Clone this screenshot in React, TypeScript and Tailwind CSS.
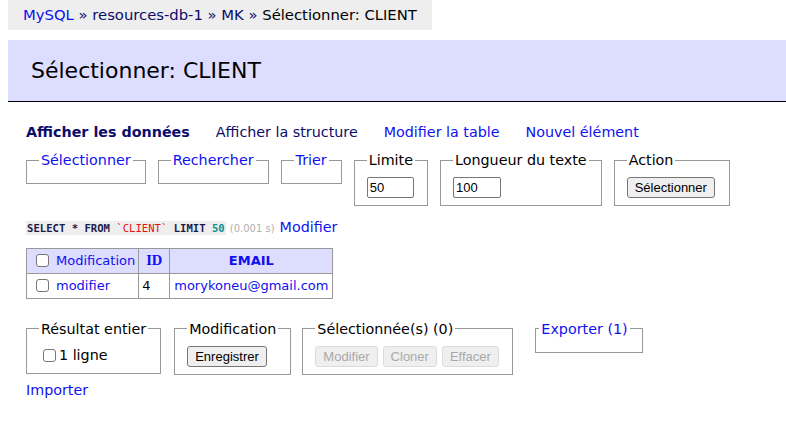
import React from "react";

const blue = "text-[#1010f0]";
const navy = "text-[#0c0c6a]";

function Box({
  legend,
  link,
  w,
  pad = "px-[12px]",
  children,
}: {
  legend: string;
  link?: boolean;
  w: string;
  pad?: string;
  children?: React.ReactNode;
}) {
  return (
    <fieldset className={`border border-[#999] py-[7px] ${pad} ${w}`}>
      <legend className={`px-[2px] leading-[18px] whitespace-nowrap ${link ? blue : "text-black"}`}>{legend}</legend>
      {children}
    </fieldset>
  );
}

function Check() {
  return <span className="inline-block shrink-0 w-[13px] h-[13px] border border-[#767676] rounded-[3px] bg-white" />;
}

function Btn({ label, disabled }: { label: string; disabled?: boolean }) {
  return (
    <button
      className={`h-[21px] px-[7px] rounded-[3px] text-[13px] font-['Liberation_Sans',sans-serif] leading-none border ${
        disabled ? "border-[#dcdcdc] bg-[#efefef] text-[#a9a9a9]" : "border-[#767676] bg-[#efefef] text-black"
      }`}
    >
      {label}
    </button>
  );
}

function Field({ value, w }: { value: string; w: string }) {
  return (
    <div className={`h-[21px] ${w} border border-[#767676] rounded-[2px] px-[2px] text-[13px] font-['Liberation_Sans',sans-serif] leading-[19px]`}>
      {value}
    </div>
  );
}

export default function App() {
  return (
    <div className="w-[786px] h-[422px] bg-white overflow-hidden font-['DejaVu_Sans',sans-serif] text-[14.3px] text-black">
      {/* Breadcrumb */}
      <div className="ml-[8px] w-[424px] h-[30px] bg-[#eee] flex items-center pl-[15px] whitespace-nowrap text-[14.8px]">
        <span className={blue}>MySQL</span>
        <span className={navy}>&nbsp;» resources-db-1 » MK »</span>
        <span>&nbsp;Sélectionner: CLIENT</span>
      </div>

      {/* Title */}
      <h2 className="mt-[10px] ml-[8px] h-[62px] bg-[#ddf] border-b border-black pl-[23px] flex items-center text-[22px]">
        Sélectionner: CLIENT
      </h2>

      <div className="pl-[26px]">
        {/* Links */}
        <div className="mt-[21px] flex gap-[26px] whitespace-nowrap leading-[18px]">
          <span className={`font-bold ${navy}`}>Afficher les données</span>
          <span className={navy}>Afficher la structure</span>
          <span className={blue}>Modifier la table</span>
          <span className={blue}>Nouvel élément</span>
        </div>

        {/* Select form */}
        <div className="mt-[10px] flex items-start gap-[12px]">
          <Box legend="Sélectionner" link w="w-[119px]" />
          <Box legend="Rechercher" link w="w-[110px]" />
          <Box legend="Trier" link w="w-[61px]" />
          <Box legend="Limite" w="w-[74px]">
            <div className="pt-[1px]">
              <Field value="50" w="w-[47px]" />
            </div>
          </Box>
          <Box legend="Longueur du texte" w="w-[161px]">
            <div className="pt-[1px]">
              <Field value="100" w="w-[48px]" />
            </div>
          </Box>
          <Box legend="Action" w="w-[116px]">
            <div className="pt-[1px]">
              <Btn label="Sélectionner" />
            </div>
          </Box>
        </div>

        {/* SQL */}
        <div className="mt-[11px] flex items-center whitespace-nowrap">
          <code className="bg-[#eee] font-['DejaVu_Sans_Mono',monospace] text-[10.6px] font-bold text-[#1a1a4a] leading-[14px] px-[1px]">
            SELECT * FROM <span className="text-[#e81010] font-normal">`CLIENT`</span> LIMIT <span className="text-[#0a8f8f]">50</span>
          </code>
          <span className="ml-[4px] text-[10px] text-[#b0b0b0]">(0.001 s)</span>
          <span className={`ml-[5px] ${blue}`}>Modifier</span>
        </div>

        {/* Table */}
        <table className="mt-[9px] border-collapse border border-[#999] text-[13px]">
          <thead>
            <tr className="bg-[#ddf] h-[25px]">
              <th className="border border-[#999] pl-[9px] pr-[3px] text-left font-normal w-[112px]">
                <span className="flex items-center gap-[7px]">
                  <Check />
                  <span className={blue}>Modification</span>
                </span>
              </th>
              <th className={`border border-[#999] w-[31px] font-bold ${blue} font-['Liberation_Serif',serif] text-[14.5px]`}>ID</th>
              <th className={`border border-[#999] w-[163px] font-bold ${blue} text-[13px]`}>EMAIL</th>
            </tr>
          </thead>
          <tbody>
            <tr className="h-[25px]">
              <td className="border border-[#999] pl-[9px] pr-[3px]">
                <span className="flex items-center gap-[7px]">
                  <Check />
                  <span className={blue}>modifier</span>
                </span>
              </td>
              <td className="border border-[#999] px-[3px]">4</td>
              <td className={`border border-[#999] px-[4px] ${blue}`}>morykoneu@gmail.com</td>
            </tr>
          </tbody>
        </table>

        {/* Bottom form */}
        <div className="mt-[21px] flex items-start">
          <Box legend="Résultat entier" w="w-[135px]">
            <div className="flex items-center gap-[3px] pl-[4px] h-[21px]">
              <Check />
              <span>1 ligne</span>
            </div>
          </Box>
          <div className="ml-[13px]">
            <Box legend="Modification" w="w-[114px]">
              <div className="pt-[1px]">
                <Btn label="Enregistrer" />
              </div>
            </Box>
          </div>
          <div className="ml-[11px]">
            <Box legend="Sélectionnée(s) (0)" w="w-[211px]">
              <div className="pt-[1px] flex gap-[5px]">
                <Btn label="Modifier" disabled />
                <Btn label="Cloner" disabled />
                <Btn label="Effacer" disabled />
              </div>
            </Box>
          </div>
          <div className="ml-[22px]">
            <Box legend="Exporter (1)" link w="w-[107px]" pad="pl-[3px] pr-[12px]" />
          </div>
        </div>

        <div className={`mt-[5px] ${blue}`}>Importer</div>
      </div>
    </div>
  );
}
